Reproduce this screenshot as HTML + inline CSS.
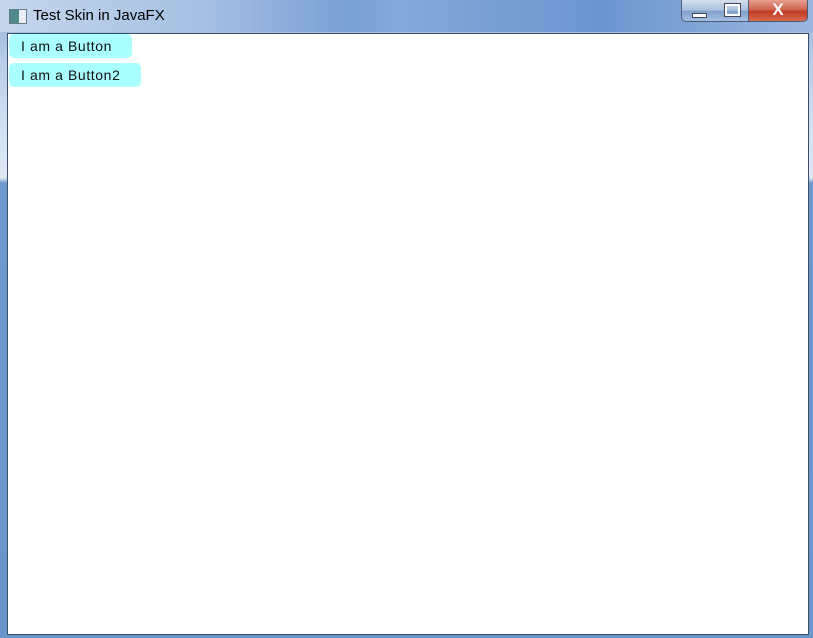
<!DOCTYPE html>
<html><head><style>
body{margin:0;width:813px;height:638px;overflow:hidden;position:relative;font-family:"Liberation Sans",sans-serif;
background:linear-gradient(180deg,#8eaedb 0px,#b9cde9 60px,#d7e3f2 140px,#dfe8f4 178px,#6f98cf 183px,#6a94cc 638px);}
.tb{position:absolute;left:0;top:0;width:813px;height:32px;background:linear-gradient(90deg,#c5d6ec 0,#a6c0e3 200px,#7aa0d6 350px,#86a8da 400px,#6c95cf 600px,#9bb7e0 813px);}
.content{position:absolute;left:7px;top:33px;width:800px;height:600px;background:#fff;border:1px solid #3d4f66;}
.btn{position:absolute;left:1px;height:24px;background:#aaffff;border-radius:5px;font-size:14px;line-height:24px;padding-left:12px;color:#111;letter-spacing:0.6px;}
.wb{position:absolute;top:0;height:21px;border:1px solid #4a5c78;border-top:none;}
</style></head><body>
<div class="tb"></div>
<div style="position:absolute;left:9px;top:9px;width:16px;height:13px;border:1px solid #6a7a8c;background:linear-gradient(90deg,#4f8a8a 0 55%,#e8eef4 55%);"></div>
<div style="position:absolute;left:33px;top:7px;font-size:15px;color:#000;">Test Skin in JavaFX</div>
<div class="wb" style="left:681px;width:33px;border-radius:0 0 0 5px;background:linear-gradient(#d4e0ef,#a9bfdc 50%,#7f9fcb 52%,#a6c0e0);"><div style="position:absolute;left:10px;top:13px;width:13px;height:3px;background:#fff;border:1px solid #445;"></div></div>
<div class="wb" style="left:715px;width:33px;border-left:none;background:linear-gradient(#d4e0ef,#a9bfdc 50%,#7f9fcb 52%,#a6c0e0);"><div style="position:absolute;left:10px;top:4px;width:11px;height:8px;border:2px solid #fff;outline:1px solid #445;"></div></div>
<div class="wb" style="left:749px;width:58px;border-left:none;border-radius:0 0 5px 0;background:linear-gradient(#e6a090,#d0654f 45%,#c03a22 55%,#d86a4f);color:#fff;font-size:17px;font-weight:bold;text-align:center;line-height:20px;">X</div>
<div class="content">
<div class="btn" style="top:0;width:111px;">I am a Button</div>
<div class="btn" style="top:29px;width:120px;">I am a Button2</div>
</div>
</body></html>
